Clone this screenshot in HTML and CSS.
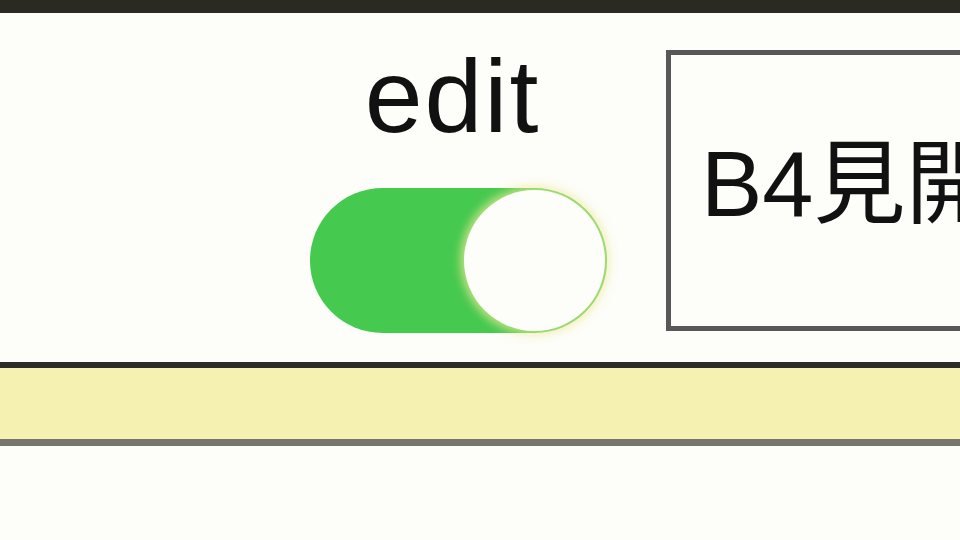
FILE: index.html
```html
<!DOCTYPE html>
<html lang="ja">
<head>
  <meta charset="UTF-8">
  <meta name="viewport" content="width=device-width, initial-scale=1.0">
  <title>B4見開き</title>
  <link rel="stylesheet" href="styles.css">
</head>
<body>
  <div class="top-bar"></div>
  <header class="toolbar">
    <div class="edit-group">
      <p class="edit-label">edit</p>
      <button class="switch is-on" aria-label="edit">
        <span class="switch-knob"></span>
      </button>
    </div>
    <div class="title-box">
      <span class="title-text">B4見開き</span>
    </div>
  </header>
  <div class="strip"></div>
</body>
</html>
```

FILE: styles.css
```css
body {
  margin: 0;
  background: #fdfdf9;
  font-family: "Liberation Sans", "Noto Sans CJK JP", sans-serif;
  color: #111;
  overflow: hidden;
  height: 100vh;
}

.top-bar {
  height: 13px;
  background: #2a2922;
}

.toolbar {
  display: flex;
  align-items: flex-end;
  gap: 59px;
  height: 355px;
  box-sizing: border-box;
  padding: 0 0 29px 310px;
  border-bottom: 6px solid #2c2c2a;
}

.edit-group {
  display: flex;
  flex-direction: column;
  align-items: center;
  gap: 40px;
}

.edit-label {
  margin: 0;
  font-size: 104px;
  line-height: 104px;
  letter-spacing: 2px;
  transform: translateX(-6px);
}

.switch {
  position: relative;
  width: 297px;
  height: 145px;
  padding: 0;
  border: none;
  border-radius: 73px;
  background: #46c94f;
  cursor: pointer;
}

.switch-knob {
  position: absolute;
  top: 2px;
  right: 2px;
  width: 141px;
  height: 141px;
  border-radius: 50%;
  background: #fdfdf9;
  box-shadow: 0 0 8px 4px rgba(236, 234, 150, 0.7);
}

.title-box {
  flex: none;
  display: flex;
  align-items: center;
  width: 420px;
  height: 281px;
  margin-bottom: 2px;
  box-sizing: border-box;
  padding: 0 0 14px 30px;
  border: 5px solid #58585a;
}

.title-text {
  font-size: 92px;
  line-height: 1;
  white-space: nowrap;
}

.strip {
  height: 71px;
  background: #f5f1b0;
  border-bottom: 7px solid #76766e;
}
```
